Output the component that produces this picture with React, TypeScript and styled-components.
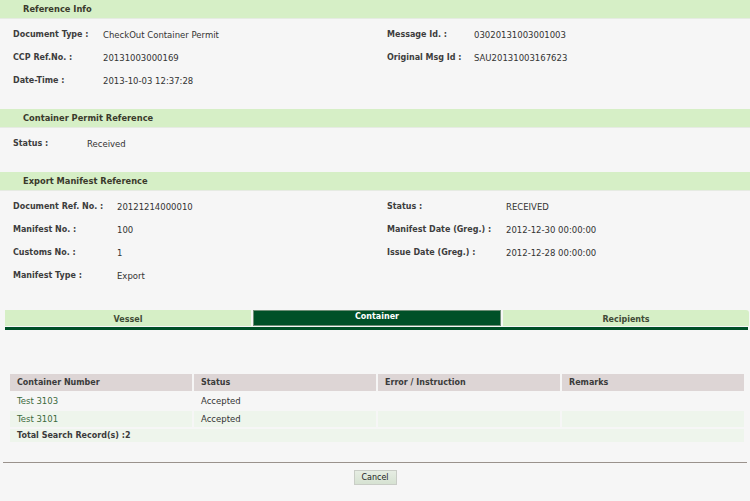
import styled, { createGlobalStyle } from "styled-components";

const GlobalStyle = createGlobalStyle`
  html, body {
    margin: 0;
    padding: 0;
    background: #f6f6f6;
  }
  body {
    font-family: "DejaVu Sans", Verdana, sans-serif;
    font-size: 8.5px;
    color: #333;
  }
`;

const Page = styled.div`
  width: 750px;
  min-height: 501px;
  background: #f6f6f6;
`;

const SectionHeader = styled.div`
  height: 18px;
  line-height: 18px;
  background: #d6efc6;
  border-bottom: 1px solid #e6ebe3;
  padding-left: 23px;
  font-weight: bold;
  font-size: 8.3px;
  color: #3a3a2c;
`;

const FieldGrid = styled.div<{ rows: number }>`
  display: grid;
  grid-template-columns: 374px 1fr;
  grid-auto-flow: column;
  grid-template-rows: repeat(${(p) => p.rows}, 23px);
  padding: 4px 0 17px 13px;
`;

const Field = styled.div`
  display: flex;
  align-items: center;
`;

const Label = styled.span<{ w: number }>`
  width: ${(p) => p.w}px;
  flex-shrink: 0;
  font-weight: bold;
  font-size: 8px;
  color: #3d3d3d;
`;

const Value = styled.span`
  color: #333;
`;

const Tabs = styled.div`
  display: flex;
  gap: 2px;
  margin: 6px 1px 0 5px;
  height: 16px;
`;

const Tab = styled.div<{ active?: boolean; last?: boolean }>`
  flex: 1;
  box-sizing: border-box;
  display: flex;
  justify-content: center;
  align-items: ${(p) => (p.active ? "flex-start" : "center")};
  padding-top: ${(p) => (p.active ? "1px" : "2px")};
  font-weight: bold;
  font-size: 8px;
  background: ${(p) => (p.active ? "#005028" : "#d6efc6")};
  color: ${(p) => (p.active ? "#ffffff" : "#3f4a36")};
  border: ${(p) => (p.active ? "1px solid #6f8f78" : "none")};
  border-top-right-radius: ${(p) => (p.last ? "3px" : "0")};
`;

const TabBar = styled.div`
  height: 3px;
  background: #005028;
  margin: 1px 2px 0 5px;
`;

const Table = styled.table`
  margin: 42px 0 0 8px;
  width: 738px;
  border-spacing: 2px;
  table-layout: fixed;
`;

const Th = styled.th`
  height: 17px;
  padding: 0 0 0 7px;
  text-align: left;
  background: #ddd5d5;
  font-weight: bold;
  font-size: 8px;
  color: #3b3b3b;
`;

const Td = styled.td<{ shaded?: boolean }>`
  height: 16px;
  padding: 0 0 0 7px;
  background: ${(p) => (p.shaded ? "#eef5ec" : "transparent")};
  color: #333;
`;

const LinkCell = styled(Td)`
  color: #3c6a3c;
`;

const TotalCell = styled.td`
  height: 13px;
  padding: 0 0 0 7px;
  background: #eef5ec;
  font-weight: bold;
  font-size: 8px;
  color: #3b3b3b;
`;

const Footer = styled.div`
  margin: 18px 3px 0 3px;
  border-top: 1px solid #9a928c;
  display: flex;
  justify-content: center;
  padding-top: 7px;
`;

const CancelButton = styled.button`
  width: 43px;
  height: 15px;
  padding: 0;
  background: linear-gradient(#e6ede3, #d6e2d2);
  border: 1px solid #c9cdc6;
  font-family: "DejaVu Sans", Verdana, sans-serif;
  font-size: 8px;
  color: #222;
`;

type Item = { label: string; value: string };

const Section = ({
  title,
  left,
  right,
  leftW,
  rightW,
}: {
  title: string;
  left: Item[];
  right: Item[];
  leftW: number;
  rightW: number;
}) => {
  const rows = Math.max(left.length, right.length);
  return (
    <>
      <SectionHeader>{title}</SectionHeader>
      <FieldGrid rows={rows}>
        {Array.from({ length: rows }).map((_, i) => (
          <Field key={"l" + i}>
            {left[i] && (
              <>
                <Label w={leftW}>{left[i].label}</Label>
                <Value>{left[i].value}</Value>
              </>
            )}
          </Field>
        ))}
        {right.map((it) => (
          <Field key={it.label}>
            <Label w={rightW}>{it.label}</Label>
            <Value>{it.value}</Value>
          </Field>
        ))}
      </FieldGrid>
    </>
  );
};

const App = () => {
  return (
    <Page>
      <GlobalStyle />
      <Section
        title="Reference Info"
        leftW={90}
        rightW={87}
        left={[
          { label: "Document Type :", value: "CheckOut Container Permit" },
          { label: "CCP Ref.No. :", value: "20131003000169" },
          { label: "Date-Time :", value: "2013-10-03 12:37:28" },
        ]}
        right={[
          { label: "Message Id. :", value: "03020131003001003" },
          { label: "Original Msg Id :", value: "SAU20131003167623" },
        ]}
      />
      <Section
        title="Container Permit Reference"
        leftW={74}
        rightW={87}
        left={[{ label: "Status :", value: "Received" }]}
        right={[]}
      />
      <Section
        title="Export Manifest Reference"
        leftW={104}
        rightW={119}
        left={[
          { label: "Document Ref. No. :", value: "20121214000010" },
          { label: "Manifest No. :", value: "100" },
          { label: "Customs No. :", value: "1" },
          { label: "Manifest Type :", value: "Export" },
        ]}
        right={[
          { label: "Status :", value: "RECEIVED" },
          { label: "Manifest Date (Greg.) :", value: "2012-12-30 00:00:00" },
          { label: "Issue Date (Greg.) :", value: "2012-12-28 00:00:00" },
        ]}
      />
      <Tabs>
        <Tab>Vessel</Tab>
        <Tab active>Container</Tab>
        <Tab last>Recipients</Tab>
      </Tabs>
      <TabBar />
      <Table>
        <thead>
          <tr>
            <Th>Container Number</Th>
            <Th>Status</Th>
            <Th>Error / Instruction</Th>
            <Th>Remarks</Th>
          </tr>
        </thead>
        <tbody>
          <tr>
            <LinkCell>Test 3103</LinkCell>
            <Td>Accepted</Td>
            <Td></Td>
            <Td></Td>
          </tr>
          <tr>
            <LinkCell shaded>Test 3101</LinkCell>
            <Td shaded>Accepted</Td>
            <Td shaded></Td>
            <Td shaded></Td>
          </tr>
          <tr>
            <TotalCell colSpan={4}>Total Search Record(s) :2</TotalCell>
          </tr>
        </tbody>
      </Table>
      <Footer>
        <CancelButton>Cancel</CancelButton>
      </Footer>
    </Page>
  );
};

export default App;
